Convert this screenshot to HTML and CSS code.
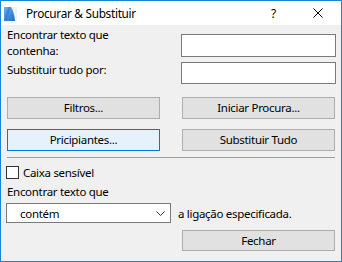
FILE: index.html
```html
<!DOCTYPE html>
<html>
<head>
<meta charset="utf-8">
<link rel="stylesheet" href="styles.css">
</head>
<body>
<div class="window">
  <div class="titlebar">
    <svg class="app-icon" width="13" height="14" viewBox="0 0 13 14">
      <defs>
        <linearGradient id="g" x1="0" y1="0" x2="1" y2="1">
          <stop offset="0" stop-color="#6fb0ec"/>
          <stop offset="1" stop-color="#1767c4"/>
        </linearGradient>
      </defs>
      <rect x="0" y="0" width="13" height="14" fill="url(#g)"/>
      <path d="M7 0 L13 0 L13 14 L11 14 C10.5 8 9 3 7 0 Z" fill="#eaf3fb"/>
      <path d="M0 14 L3 14 C4 8 5.5 3 7 0 L5 0 C3 4 1 9 0 14 Z" fill="#2f7fd6" opacity="0.7"/>
    </svg>
    <span class="title">Procurar &amp; Substituir</span>
    <span class="help">?</span>
    <svg class="close" width="10" height="10" viewBox="0 0 10 10">
      <path d="M0.5 0.5 L9.5 9.5 M9.5 0.5 L0.5 9.5" stroke="#000" stroke-width="1" fill="none"/>
    </svg>
  </div>
  <div class="content">
    <div class="row row-find">
      <div class="label">Encontrar texto que<br>contenha:</div>
      <div class="input input-find"></div>
    </div>
    <div class="row row-replace">
      <div class="label">Substituir tudo por:</div>
      <div class="input"></div>
    </div>
    <div class="buttons">
      <div class="btn">Filtros...</div>
      <div class="btn">Iniciar Procura...</div>
      <div class="btn btn-default">Pricipiantes...</div>
      <div class="btn">Substituir Tudo</div>
    </div>
    <div class="sep"></div>
    <div class="check-row">
      <span class="checkbox"></span>
      <span class="check-label">Caixa sensível</span>
    </div>
    <div class="label label-mode">Encontrar texto que</div>
    <div class="select-row">
      <div class="select">
        <span>contém</span>
        <svg class="chev" width="9" height="5" viewBox="0 0 9 5">
          <path d="M0.5 0.5 L4.5 4.5 L8.5 0.5" stroke="#333" stroke-width="1" fill="none"/>
        </svg>
      </div>
      <span class="after">a ligação especificada.</span>
    </div>
    <div class="footer">
      <div class="btn">Fechar</div>
    </div>
  </div>
</div>
</body>
</html>
```
FILE: styles.css
```css
html, body {
  margin: 0;
  padding: 0;
  background: #f0f0f0;
}
body {
  font-family: "Noto Sans", "Open Sans", sans-serif;
  font-size: 11.5px;
  letter-spacing: -0.3px;
  color: #000;
}
.window {
  width: 342px;
  height: 262px;
  box-sizing: border-box;
  border: 1px solid #1883d7;
  background: #f0f0f0;
  overflow: hidden;
}
.titlebar {
  height: 24px;
  background: #fff;
  display: flex;
  align-items: center;
}
.app-icon {
  margin-left: 3px;
  margin-top: 1px;
}
.title {
  margin-left: 9px;
  font-size: 11.8px;
  line-height: 16px;
}
.help {
  margin-left: auto;
  margin-right: 37px;
  font-size: 12px;
}
.close {
  margin-right: 18px;
}
.content {
  padding: 0 6px;
}
.row {
  display: flex;
  justify-content: space-between;
  align-items: flex-start;
}
.label {
  line-height: 16px;
  white-space: nowrap;
}
.row-find {
  margin-top: 2px;
  height: 32px;
}
.row-find .input {
  margin-top: 7px;
}
.row-replace {
  margin-top: 3px;
  height: 22px;
}
.input {
  width: 155px;
  height: 23px;
  box-sizing: border-box;
  border: 1px solid #7a7a7a;
  background: #fff;
  margin-right: -1px;
}
.row-replace .input {
  height: 22px;
}
.buttons {
  margin-top: 13px;
  display: grid;
  grid-template-columns: 153px 153px;
  column-gap: 22px;
  row-gap: 10px;
}
.btn {
  height: 22px;
  box-sizing: border-box;
  border: 1px solid #adadad;
  background: #e1e1e1;
  display: flex;
  align-items: center;
  justify-content: center;
  line-height: 16px;
}
.btn-default {
  border-color: #0078d7;
  background: #e5f1fb;
}
.sep {
  margin-top: 6px;
  height: 1px;
  background: #a0a0a0;
}
.check-row {
  margin-top: 8px;
  height: 13px;
  display: flex;
  align-items: center;
}
.checkbox {
  width: 13px;
  height: 13px;
  box-sizing: border-box;
  border: 1px solid #333;
  background: #fff;
  margin-left: -1px;
}
.check-label {
  margin-left: 4px;
  line-height: 16px;
}
.label-mode {
  margin-top: 5px;
}
.select-row {
  margin-top: 3px;
  display: flex;
  align-items: center;
}
.select {
  flex: none;
  width: 165px;
  height: 20px;
  box-sizing: border-box;
  border: 1px solid #7a7a7a;
  background: #fff;
  margin-left: -1px;
  display: flex;
  align-items: center;
  justify-content: space-between;
  padding: 0 5px 0 13px;
}
.chev {
  margin-top: 1px;
}
.after {
  margin-left: 7px;
  white-space: nowrap;
}
.footer {
  margin-top: 7px;
  display: grid;
  grid-template-columns: 153px;
  justify-content: end;
}
.footer .btn {
  height: 21px;
}
```
